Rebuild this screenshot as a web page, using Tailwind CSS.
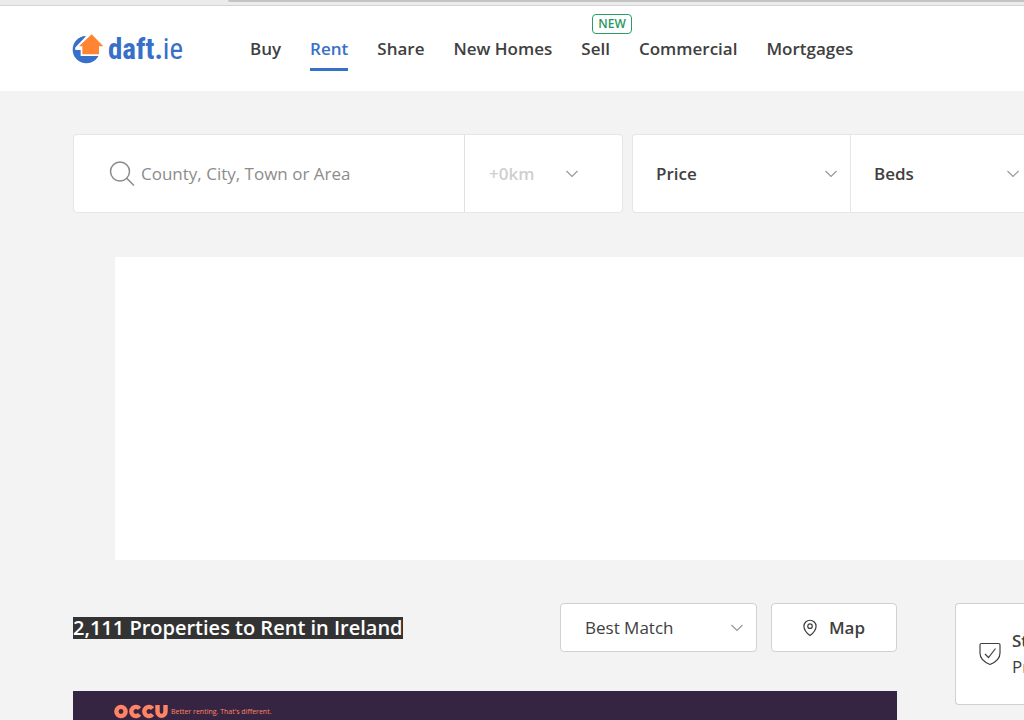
<!DOCTYPE html>
<html lang="en">
<head>
    <meta charset="UTF-8">
    <meta name="viewport" content="width=device-width, initial-scale=1.0">
    <title>Properties to Rent in Ireland | Daft.ie</title>
    <script src="https://cdn.jsdelivr.net/npm/@tailwindcss/browser@4"></script>
</head>
<body class="bg-[#f3f3f3] text-[#404040] text-[17px] leading-6 font-['Open_Sans',sans-serif] antialiased h-screen overflow-hidden">

    <!-- Window edge -->
    <div class="h-1.5 bg-[#ebebeb] border-b border-[#d4d4d4] pl-[228px]">
        <div class="h-0.5 bg-[#c4c4c4] rounded-bl-sm"></div>
    </div>

    <!-- Header -->
    <header class="bg-white h-[85px] pl-[72px] flex items-center">
        <a href="#" aria-label="daft.ie" class="flex items-center gap-1 w-[178px] text-[#3770c8] whitespace-nowrap">
            <svg class="w-8 h-[30px] shrink-0" viewBox="36 40 96 90" aria-hidden="true">
                <circle cx="79" cy="87" r="41" fill="#3770c8"/>
                <path d="M92 30 L46 77 V88 H62 V106 H124 V30 Z" fill="#fff"/>
                <path d="M46 85 L78 53 L66 51 L46 68 Z" fill="#fff"/>
                <path d="M39 84 C42 63 56 48 78 47 L45 81 Z" fill="#3770c8"/>
                <path d="M95 41 L130 77 H117 V101 H67 V77 H57 Z" fill="#ff8533"/>
            </svg>
            <span class="text-[29px] leading-8 font-['Roboto_Condensed','Roboto',sans-serif]"><b>daft.</b>ie</span>
        </a>
        <nav class="flex gap-[29px] font-semibold">
            <a href="#" class="py-[7px]">Buy</a>
            <a href="#" class="py-[7px] border-b-3 border-[#3770c8] text-[#3770c8] -mb-[3px]">Rent</a>
            <a href="#" class="py-[7px]">Share</a>
            <a href="#" class="py-[7px]">New Homes</a>
            <a href="#" class="py-[7px] relative">Sell
                <span class="absolute left-[11px] -top-4 h-5 px-[5px] border border-[#2a9d66] rounded bg-white text-[#1f9a5e] text-xs leading-[18px]">NEW</span>
            </a>
            <a href="#" class="py-[7px]">Commercial</a>
            <a href="#" class="py-[7px]">Mortgages</a>
        </nav>
    </header>

    <main class="pl-[73px] pt-[43px]">
        <!-- Search filters -->
        <form class="flex gap-[9px] h-[79px]">
            <div class="flex w-[550px] shrink-0 bg-white border border-[#e6e6e6] rounded">
                <label class="flex flex-1 items-center gap-1.5 pl-[35px] border-r border-[#e0e0e0]">
                    <svg class="size-[26px] shrink-0 text-[#8a8a8a]" viewBox="0 0 26 26" fill="none" stroke="currentColor" stroke-width="1.5" aria-hidden="true">
                        <circle cx="11" cy="10.5" r="9.5"/>
                        <path d="M17.5 17 L25 24.5"/>
                    </svg>
                    <input type="text" aria-label="Location" placeholder="County, City, Town or Area" class="w-full min-w-0 outline-none placeholder:text-[#8c8c8c]">
                </label>
                <div class="relative w-[157px]">
                    <select aria-label="Radius" disabled class="appearance-none size-full pl-6 font-semibold text-[#cfcfcf]">
                        <option>+0km</option>
                    </select>
                    <svg class="absolute right-11 top-[35px] w-3 h-2 pointer-events-none text-[#999]" viewBox="0 0 12 8" fill="none" stroke="currentColor" stroke-width="1.2"><path d="M0.5 1 L6 6.5 L11.5 1"/></svg>
                </div>
            </div>
            <div class="flex flex-1 bg-white border border-r-0 border-[#e6e6e6] rounded-l">
                <button type="button" class="flex items-center justify-between w-[218px] shrink-0 pl-[23px] pr-[13px] border-r border-[#e6e6e6] font-semibold">
                    Price
                    <svg class="w-3 h-2 text-[#999]" viewBox="0 0 12 8" fill="none" stroke="currentColor" stroke-width="1.2"><path d="M0.5 1 L6 6.5 L11.5 1"/></svg>
                </button>
                <button type="button" class="flex flex-1 items-center justify-between pl-[23px] pr-[5px] font-semibold">
                    Beds
                    <svg class="w-3 h-2 text-[#999]" viewBox="0 0 12 8" fill="none" stroke="currentColor" stroke-width="1.2"><path d="M0.5 1 L6 6.5 L11.5 1"/></svg>
                </button>
            </div>
        </form>

        <!-- Banner slot -->
        <div class="mt-11 ml-[42px] h-[303px] bg-white"></div>

        <div class="flex gap-[58px] mt-[43px]">
            <!-- Results -->
            <section class="flex-1">
                <div class="flex items-center gap-3.5 h-[49px]">
                    <h1 class="mr-auto text-xl leading-[22px] font-semibold whitespace-nowrap"><span class="block bg-[#333] text-white">2,111 Properties to Rent in Ireland</span></h1>
                    <div class="relative w-[197px] h-full">
                        <select aria-label="Sort by" class="appearance-none size-full pl-6 bg-white border border-[#d0d0d0] rounded">
                            <option>Best Match</option>
                        </select>
                        <svg class="absolute right-3.5 top-[21px] w-3 h-2 pointer-events-none text-[#999]" viewBox="0 0 12 8" fill="none" stroke="currentColor" stroke-width="1.2"><path d="M0.5 1 L6 6.5 L11.5 1"/></svg>
                    </div>
                    <button type="button" class="flex items-center justify-center gap-3 w-[126px] h-full bg-white border border-[#d0d0d0] rounded font-semibold">
                        <svg class="w-3.5 h-[18px]" viewBox="0 0 15 18" fill="none" stroke="currentColor" stroke-width="1.3" aria-hidden="true">
                            <path d="M7.5 17 C5.5 15.5 1 11 1 7 A6.5 6.3 0 0 1 14 7 C14 11 9.5 15.5 7.5 17 Z"/>
                            <circle cx="7.5" cy="7" r="2.4"/>
                        </svg>
                        Map
                    </button>
                </div>
                <article class="mt-[39px] h-[120px] bg-[#362542] pl-[41px] pt-2.5 flex items-start gap-[3px] text-[#ff8465]">
                    <svg class="w-[54px] h-[22px]" viewBox="0 0 54 22" fill="none" stroke="currentColor" stroke-width="4.4" role="img" aria-label="OCCU">
                        <circle cx="7" cy="10.5" r="4.6"/>
                        <path d="M25.5 7.6 A4.6 4.6 0 1 0 25.5 13.4"/>
                        <path d="M38.5 7.6 A4.6 4.6 0 1 0 38.5 13.4"/>
                        <path d="M43.5 4 V10.5 A4 4.4 0 0 0 51.5 10.5 V4"/>
                    </svg>
                    <p class="text-[7px] leading-[22px]">Better renting. That's different.</p>
                </article>
            </section>

            <!-- Sidebar -->
            <aside class="w-[69px] h-[102px] pl-[23px] flex items-center gap-[11px] bg-white border border-r-0 border-[#d0d0d0] rounded-l whitespace-nowrap overflow-hidden">
                <svg class="w-[22px] h-6 shrink-0" viewBox="0 0 22 24" fill="none" stroke="currentColor" stroke-width="1.2" aria-hidden="true">
                    <path d="M2.5 1.5 H19.5 Q21 1.5 21 3 V11 C21 17 16 20.5 11 22.5 C6 20.5 1 17 1 11 V3 Q1 1.5 2.5 1.5 Z"/>
                    <path d="M6 12 L9.5 15.5 L16.5 6.5"/>
                </svg>
                <div class="leading-[26px]">
                    <h2 class="font-semibold">St</h2>
                    <p>Pr</p>
                </div>
            </aside>
        </div>
    </main>
</body>
</html>
